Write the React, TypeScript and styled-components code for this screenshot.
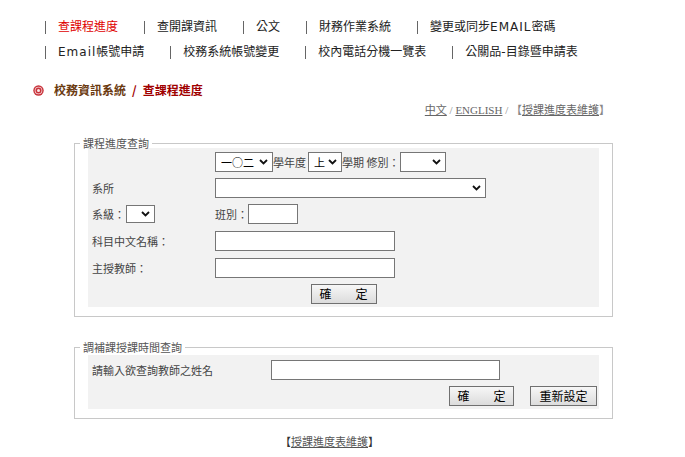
import React from "react";
import styled, { createGlobalStyle } from "styled-components";

const GlobalStyle = createGlobalStyle`
  html, body { margin: 0; padding: 0; background: #fff; }
  body {
    font-family: "Noto Sans CJK TC", sans-serif;
    font-size: 12px;
    color: #333;
  }
  * { box-sizing: border-box; }
`;

const Page = styled.div`
  width: 685px;
  height: 457px;
  overflow: hidden;
`;

const Menu = styled.nav`
  padding: 15px 0 0 45px;
`;

const MenuRow = styled.div`
  display: flex;
  align-items: center;
  height: 25px;
`;

const MenuItem = styled.a<{ $active?: boolean }>`
  display: flex;
  align-items: center;
  height: 13px;
  line-height: 13px;
  border-left: 1px solid #666;
  padding-left: 12px;
  margin-right: 26px;
  font-family: "DejaVu Sans", "Noto Sans CJK TC", sans-serif;
  font-size: 12px;
  color: ${(p) => (p.$active ? "#e00000" : "#222")};
  text-decoration: none;
  white-space: nowrap;
`;

const Latin = styled.span`
  letter-spacing: 1px;
`;

const Breadcrumb = styled.div`
  display: flex;
  align-items: center;
  height: 14px;
  margin-top: 18px;
  padding-left: 33px;
  font-size: 12px;
  font-weight: bold;
  line-height: 14px;
`;

const CrumbIcon = styled.svg`
  width: 11px;
  height: 11px;
  margin-right: 10px;
  flex: none;
`;

const CrumbHome = styled.span`
  color: #6b3a10;
`;

const CrumbSep = styled.span`
  color: #a00000;
  margin: 0 6px;
`;

const CrumbCurrent = styled.span`
  color: #a00000;
`;

const LangBar = styled.div`
  margin-top: 6px;
  height: 14px;
  line-height: 14px;
  padding-right: 75px;
  text-align: right;
  font-family: "Liberation Serif", "Noto Sans CJK TC", serif;
  font-size: 11px;
  color: #888;
`;

const LangLink = styled.a`
  color: #666;
  text-decoration: underline;
`;

const Fieldset = styled.fieldset<{ $top: number; $padTop: number }>`
  margin: ${(p) => p.$top}px 72px 0 74px;
  padding: ${(p) => p.$padTop}px 13px 9px;
  border: 1px solid #c8c8c8;
  min-width: 0;
`;

const Legend = styled.legend`
  margin-left: -8px;
  padding: 0 3px;
  font-size: 11px;
  line-height: 10px;
  color: #555;
`;

const QueryGrid = styled.div`
  display: grid;
  grid-template-columns: 127px 1fr;
  grid-template-rows: 26px 26px 27px 27px 26px 23px;
  align-items: start;
  padding: 4px 0 0;
  background: #f2f2f2;
`;

const Cell = styled.div<{ $span?: boolean; $center?: boolean }>`
  display: flex;
  align-items: center;
  height: 20px;
  padding-left: ${(p) => (p.$center ? 0 : 4)}px;
  grid-column: ${(p) => (p.$span ? "1 / span 2" : "auto")};
  justify-content: ${(p) => (p.$center ? "center" : "flex-start")};
  font-size: 11px;
  color: #444;
  white-space: nowrap;
`;

const ControlCell = styled(Cell)`
  padding-left: 0;
`;

const Text = styled.span<{ $gap?: number }>`
  font-size: 11px;
  color: #444;
  margin-right: ${(p) => p.$gap ?? 0}px;
`;

const SelectWrap = styled.span<{ $w: number; $h: number; $mt?: number }>`
  position: relative;
  display: inline-flex;
  width: ${(p) => p.$w}px;
  height: ${(p) => p.$h}px;
  margin-top: ${(p) => p.$mt ?? 0}px;
  flex: none;
`;

const Select = styled.select`
  appearance: none;
  -webkit-appearance: none;
  width: 100%;
  height: 100%;
  margin: 0;
  padding: 0 0 0 5px;
  border: 1px solid #767676;
  border-radius: 0;
  background: #fff;
  font-family: "Noto Sans CJK TC", sans-serif;
  font-size: 11px;
  color: #000;
  outline: none;
`;

const Chevron = styled.svg`
  position: absolute;
  right: 5px;
  top: 50%;
  width: 9px;
  height: 6px;
  margin-top: -3px;
  pointer-events: none;
`;

const Input = styled.input<{ $w: number }>`
  width: ${(p) => p.$w}px;
  height: 20px;
  margin: 0;
  padding: 0 3px;
  border: 1px solid #767676;
  border-radius: 0;
  background: #fff;
  font-size: 12px;
  outline: none;
  flex: none;
`;

const Button = styled.button<{ $w: number }>`
  width: ${(p) => p.$w}px;
  height: 20px;
  margin: 0;
  padding: 0;
  border: 1px solid #707070;
  border-radius: 0;
  background: linear-gradient(#f7f7f7, #dcdcdc);
  font-family: "Noto Sans CJK TC", sans-serif;
  font-size: 12px;
  line-height: 18px;
  color: #000;
  white-space: pre;
  cursor: pointer;
`;

const TeacherGrid = styled.div`
  display: grid;
  grid-template-columns: 181px 1fr;
  row-gap: 6px;
  padding: 5px 2px 3px;
  background: #f2f2f2;
`;

const TeacherLabel = styled.div`
  display: flex;
  align-items: center;
  height: 20px;
  padding-left: 2px;
  font-size: 11px;
  color: #444;
`;

const ButtonRow = styled.div`
  grid-column: 1 / span 2;
  display: flex;
  justify-content: flex-end;
  gap: 16px;
`;

const Footer = styled.div`
  margin-top: 15px;
  height: 14px;
  line-height: 14px;
  text-align: center;
  padding-right: 26px;
  font-size: 11px;
`;

const FooterLink = styled.a`
  color: #555;
  text-decoration: underline;
`;

const Dropdown: React.FC<{ w: number; h?: number; mt?: number; value?: string; options?: string[] }> = ({
  w,
  h = 20,
  mt,
  value = "",
  options = [""],
}) => (
  <SelectWrap $w={w} $h={h} $mt={mt}>
    <Select defaultValue={value}>
      {options.map((o) => (
        <option key={o} value={o}>
          {o}
        </option>
      ))}
    </Select>
    <Chevron viewBox="0 0 9 6">
      <polyline points="1,1 4.5,4.5 8,1" fill="none" stroke="#111" strokeWidth="1.8" />
    </Chevron>
  </SelectWrap>
);

export default function App() {
  return (
    <Page>
      <GlobalStyle />
      <Menu>
        <MenuRow>
          <MenuItem $active>查課程進度</MenuItem>
          <MenuItem>查開課資訊</MenuItem>
          <MenuItem>公文</MenuItem>
          <MenuItem>財務作業系統</MenuItem>
          <MenuItem>
            變更或同步<Latin>EMAIL</Latin>密碼
          </MenuItem>
        </MenuRow>
        <MenuRow>
          <MenuItem>
            <Latin>Email</Latin>帳號申請
          </MenuItem>
          <MenuItem>校務系統帳號變更</MenuItem>
          <MenuItem>校內電話分機一覽表</MenuItem>
          <MenuItem>公關品-目錄暨申請表</MenuItem>
        </MenuRow>
      </Menu>

      <Breadcrumb>
        <CrumbIcon viewBox="0 0 11 11">
          <circle cx="5.5" cy="5.5" r="5.2" fill="#c8323a" />
          <circle cx="5.5" cy="5.5" r="3.8" fill="#f6d6d8" />
          <circle cx="5.5" cy="5.5" r="3" fill="#c8323a" />
          <circle cx="5.5" cy="5.5" r="1.5" fill="#fbe9ea" />
        </CrumbIcon>
        <CrumbHome>校務資訊系統</CrumbHome>
        <CrumbSep>/</CrumbSep>
        <CrumbCurrent>查課程進度</CrumbCurrent>
      </Breadcrumb>

      <LangBar>
        <LangLink>中文</LangLink> / <LangLink>ENGLISH</LangLink> / 【<LangLink>授課進度表維護</LangLink>】
      </LangBar>

      <Fieldset $top={21} $padTop={0}>
        <Legend>課程進度查詢</Legend>
        <QueryGrid>
          <Cell />
          <ControlCell>
            <Dropdown w={58} value="一○二" options={["一○二", "一○一", "一○○"]} />
            <Text $gap={2}>學年度</Text>
            <Dropdown w={34} value="上" options={["上", "下"]} />
            <Text $gap={1}>學期 修別：</Text>
            <Dropdown w={46} />
          </ControlCell>

          <Cell>系所</Cell>
          <ControlCell>
            <Dropdown w={271} />
          </ControlCell>

          <Cell>
            <Text $gap={1}>系級：</Text>
            <Dropdown w={29} h={18} />
          </Cell>
          <ControlCell>
            <Text>班別：</Text>
            <Input $w={50} />
          </ControlCell>

          <Cell>科目中文名稱：</Cell>
          <ControlCell>
            <Input $w={180} />
          </ControlCell>

          <Cell>主授教師：</Cell>
          <ControlCell>
            <Input $w={180} />
          </ControlCell>

          <Cell $span $center>
            <Button $w={66}>{"確　　定"}</Button>
          </Cell>
        </QueryGrid>
      </Fieldset>

      <Fieldset $top={25} $padTop={3}>
        <Legend>調補課授課時間查詢</Legend>
        <TeacherGrid>
          <TeacherLabel>請輸入欲查詢教師之姓名</TeacherLabel>
          <div>
            <Input $w={229} />
          </div>
          <ButtonRow>
            <Button $w={65}>{"確　　定"}</Button>
            <Button $w={67}>重新設定</Button>
          </ButtonRow>
        </TeacherGrid>
      </Fieldset>

      <Footer>
        【<FooterLink>授課進度表維護</FooterLink>】
      </Footer>
    </Page>
  );
}
